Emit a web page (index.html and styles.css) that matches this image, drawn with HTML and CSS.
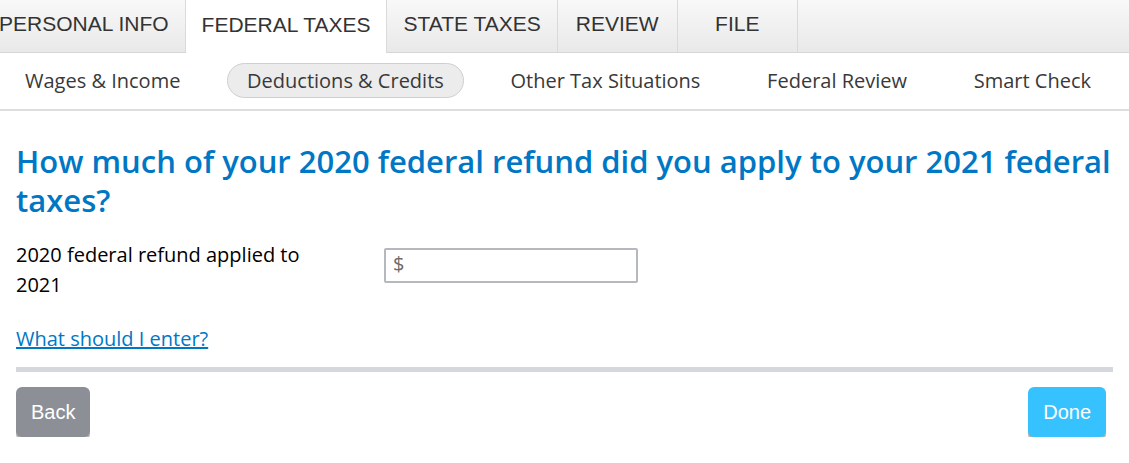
FILE: index.html
```html
<!DOCTYPE html>
<html>
<head lang="en">
    <meta charset="UTF-8">
    <title>Federal Taxes</title>
    <link rel="stylesheet" href="styles.css">
</head>
<body>
<nav class="tabs">
    <a class="tab tab-first">PERSONAL INFO</a>
    <a class="tab on">FEDERAL TAXES</a>
    <a class="tab">STATE TAXES</a>
    <a class="tab">REVIEW</a>
    <a class="tab">FILE</a>
</nav>
<nav class="steps">
    <a class="step">Wages &amp; Income</a>
    <a class="step on">Deductions &amp; Credits</a>
    <a class="step">Other Tax Situations</a>
    <a class="step">Federal Review</a>
    <a class="step">Smart Check</a>
</nav>
<div class="page">
    <h1 class="title">How much of your 2020 federal refund did you apply to your 2021 federal taxes?</h1>
    <div class="field">
        <label class="field-label" for="refund">2020 federal refund applied to 2021</label>
        <div class="money">
            <span class="money-sign">$</span>
            <input id="refund" class="money-input" type="text">
        </div>
    </div>
    <a class="help" href="#">What should I enter?</a>
    <div class="rule"></div>
    <div class="actions">
        <button class="btn btn-back">Back</button>
        <button class="btn btn-done">Done</button>
    </div>
</div>
</body>
</html>
```
FILE: styles.css
```css
* {
    margin: 0;
    padding: 0;
    box-sizing: border-box;
}

body {
    font-family: "Open Sans", "Noto Sans", sans-serif;
    color: #000;
    background: #fff;
    overflow: hidden;
}

/* top tabs */
.tabs {
    display: flex;
    height: 53px;
    background: linear-gradient(#f8f8f8, #e9e9e9);
    border-bottom: 1px solid #d6d6d6;
}

.tab {
    display: flex;
    align-items: center;
    justify-content: center;
    min-width: 120px;
    padding: 0 16px 4px;
    border-right: 1px solid #dadada;
    font-family: "Liberation Sans", Arial, sans-serif;
    font-size: 21px;
    color: #333;
    cursor: pointer;
}

.tab-first {
    margin-left: -17px;
}

.tab.on {
    background: #fff;
    margin-bottom: -1px;
}

/* sub steps */
.steps {
    display: flex;
    justify-content: space-between;
    align-items: center;
    height: 58px;
    padding: 0 18px 2px 5px;
    border-bottom: 2px solid #dedede;
}

.step {
    height: 35px;
    line-height: 33px;
    padding: 0 19px;
    border: 1px solid transparent;
    border-radius: 18px;
    font-size: 20px;
    color: #393939;
    cursor: pointer;
}

.step.on {
    background: #ececec;
    border-color: #cfcfcf;
}

/* page body */
.page {
    padding: 31px 16px 0 16px;
}

.title {
    font-size: 31px;
    font-weight: 600;
    line-height: 39px;
    color: #0077c5;
}

.field {
    display: flex;
    align-items: flex-start;
    margin-top: 20px;
}

.field-label {
    width: 368px;
    padding-right: 50px;
    font-size: 20px;
    line-height: 30px;
}

.money {
    position: relative;
    margin-top: 8px;
}

.money-sign {
    position: absolute;
    left: 9px;
    top: 2px;
    font-size: 20px;
    color: #6e6a66;
}

.money-input {
    width: 254px;
    height: 35px;
    border: 2px solid #b5b8bd;
    border-radius: 2px;
    padding-left: 26px;
    font-size: 20px;
    font-family: inherit;
    outline: none;
}

.help {
    display: inline-block;
    margin-top: 24px;
    font-size: 20px;
    line-height: 30px;
    color: #0077c5;
}

.rule {
    height: 5px;
    margin-top: 13px;
    background: #d4d7dc;
}

.actions {
    display: flex;
    justify-content: space-between;
    padding: 15px 7px 0 0;
}

.btn {
    height: 50px;
    padding: 0 15px;
    border: none;
    border-radius: 6px;
    font-family: "Liberation Sans", Arial, sans-serif;
    font-size: 20px;
    color: #fff;
    box-shadow: 0 3px 0 #b3b3b3;
    cursor: pointer;
}

.btn-back {
    background: #8c8f95;
}

.btn-done {
    background: #36c2ff;
}
```
